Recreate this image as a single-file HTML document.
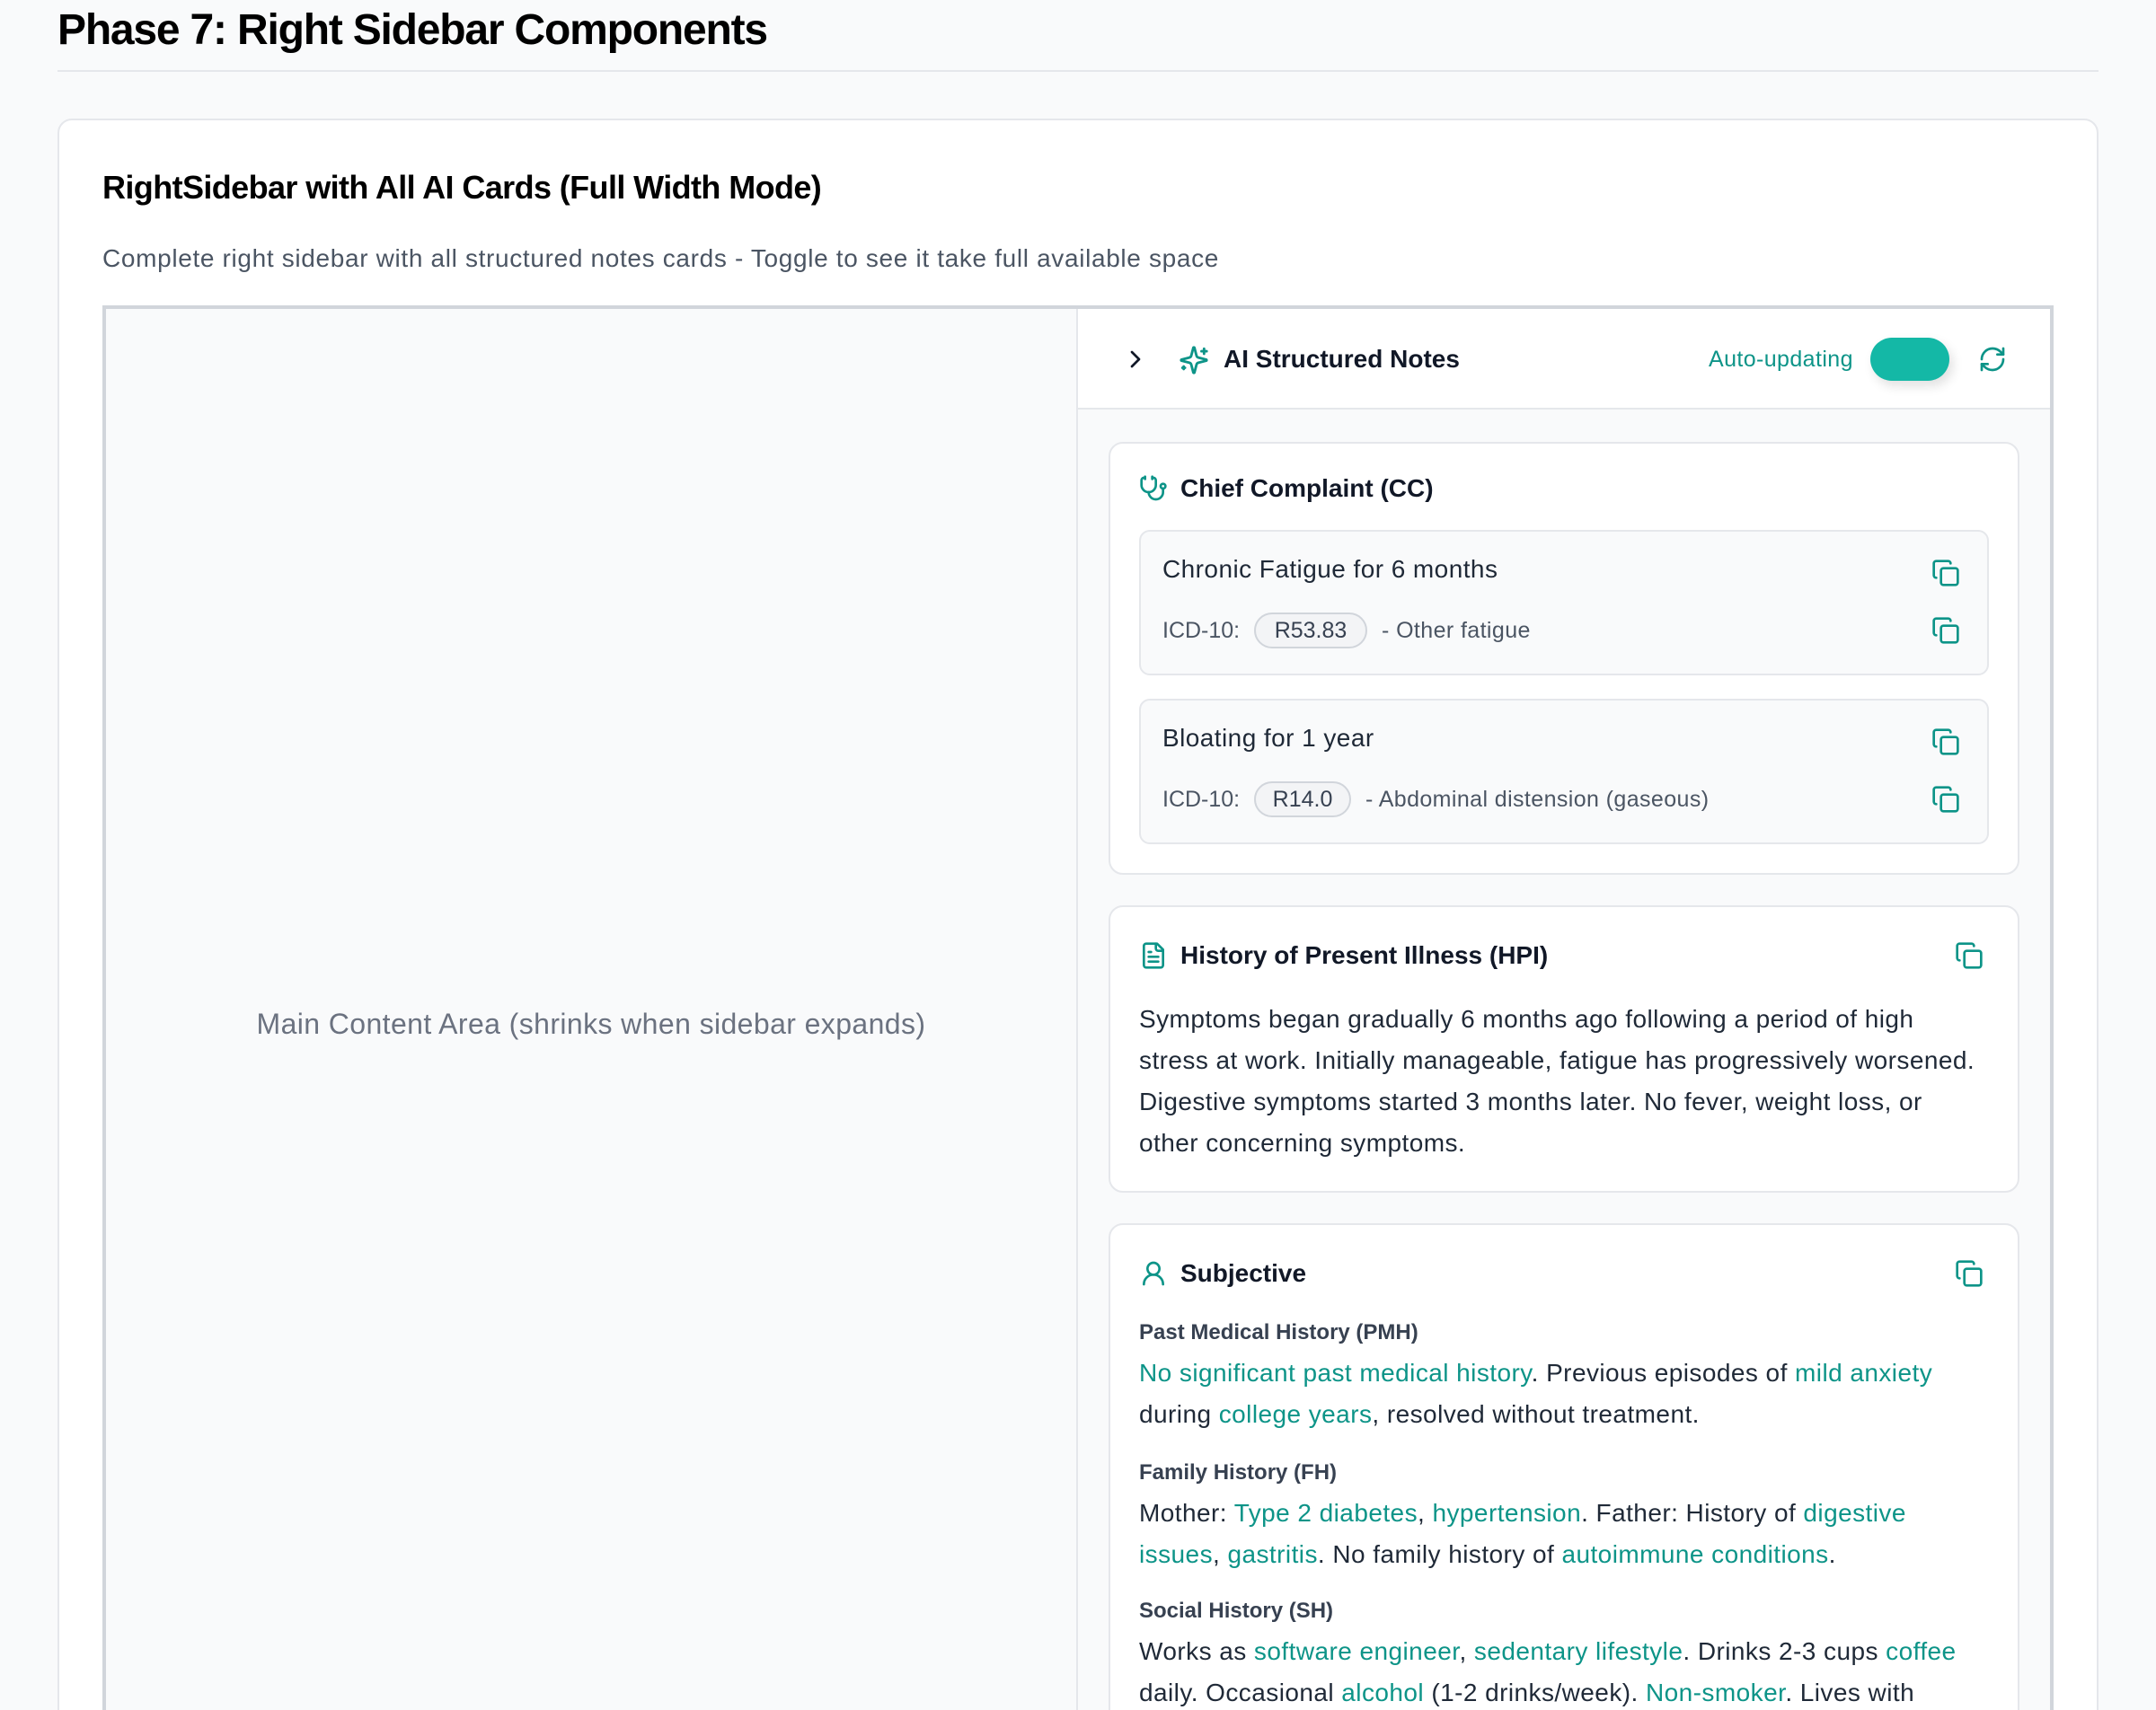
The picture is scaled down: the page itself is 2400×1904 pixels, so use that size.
<!DOCTYPE html>
<html><head><meta charset="utf-8">
<style>
*{box-sizing:border-box;margin:0;padding:0}
html,body{width:2400px;height:1904px;overflow:hidden;background:#f9fafb}
#w{zoom:2;width:1200px;height:952px;position:relative;font-family:"Liberation Sans",sans-serif;color:#111827;overflow:hidden}
.a{position:absolute;white-space:nowrap}
svg{position:absolute;fill:none;stroke-linecap:round;stroke-linejoin:round}
.t{color:#0d9488}
.ic{stroke:#0d9488;stroke-width:2}
.card{position:absolute;left:617px;width:507px;background:#fff;border:1px solid #e5e7eb;border-radius:8px}
.item{position:absolute;left:634px;width:473px;background:#f9fafb;border:1px solid #e5e7eb;border-radius:6px}
.h{font-size:14px;font-weight:bold;color:#111827}
.p{font-size:14px;color:#1f2937;letter-spacing:0.22px}
.lbl{font-size:12px;font-weight:bold;color:#374151}
.icd{font-size:12.5px;color:#4b5563}
.pill{position:absolute;height:20px;border:1px solid #d1d5db;background:#f3f4f6;border-radius:10px;font-size:12.5px;color:#374151;text-align:center;line-height:18px}
</style></head><body><div id="w">
<div class="a" style="left:32px;top:3px;font-size:24px;font-weight:bold;color:#000;letter-spacing:-0.6px">Phase 7: Right Sidebar Components</div>
<div class="a" style="left:32px;top:39px;width:1136px;height:1px;background:#e5e7eb"></div>
<div class="a" style="left:32px;top:66px;width:1136px;height:920px;background:#fff;border:1px solid #e5e7eb;border-radius:8px"></div>
<div class="a" style="left:57px;top:94px;font-size:18px;font-weight:bold;color:#000;letter-spacing:-0.3px">RightSidebar with All AI Cards (Full Width Mode)</div>
<div class="a" style="left:57px;top:136px;font-size:14px;color:#4b5563;letter-spacing:0.33px">Complete right sidebar with all structured notes cards - Toggle to see it take full available space</div>
<div class="a" style="left:57px;top:170px;width:1086px;height:820px;border:2px solid #d1d5db;background:#f9fafb"></div>
<div class="a" style="left:599px;top:172px;width:1px;height:800px;background:#e5e7eb"></div>
<div class="a" style="left:59px;top:561px;width:540px;text-align:center;font-size:16px;color:#6b7280;letter-spacing:0.2px">Main Content Area (shrinks when sidebar expands)</div>
<div class="a" style="left:600px;top:172px;width:541px;height:56px;background:#fff;border-bottom:1px solid #e5e7eb"></div>
<svg style="left:624px;top:192px" width="16" height="16" viewBox="0 0 24 24" stroke="#111827" stroke-width="2"><path d="m9 18 6-6-6-6"/></svg>
<svg style="left:656px;top:192px" width="17" height="17" viewBox="0 0 24 24" class="ic"><path d="M9.937 15.5A2 2 0 0 0 8.5 14.063l-6.135-1.582a.5.5 0 0 1 0-.962L8.5 9.936A2 2 0 0 0 9.937 8.5l1.582-6.135a.5.5 0 0 1 .963 0L14.063 8.5A2 2 0 0 0 15.5 9.937l6.135 1.581a.5.5 0 0 1 0 .964L15.5 14.063a2 2 0 0 0-1.437 1.437l-1.582 6.135a.5.5 0 0 1-.963 0z"/><path d="M20 3v4"/><path d="M22 5h-4"/><path d="M4 17v2"/><path d="M5 18H3"/></svg>
<div class="a h" style="left:681px;top:192px;font-size:14px">AI Structured Notes</div>
<div class="a t" style="left:951px;top:193px;font-size:12.5px;letter-spacing:0.2px">Auto-updating</div>
<div class="a" style="left:1041px;top:188px;width:44px;height:24px;border-radius:12px;background:#14b8a6;box-shadow:2px 3px 6px rgba(0,0,0,.12)"></div>
<svg style="left:1101px;top:192px" width="16" height="16" viewBox="0 0 24 24" class="ic"><path d="M3 12a9 9 0 0 1 9-9 9.75 9.75 0 0 1 6.74 2.74L21 8"/><path d="M21 3v5h-5"/><path d="M21 12a9 9 0 0 1-9 9 9.75 9.75 0 0 1-6.74-2.74L3 16"/><path d="M8 16H3v5"/></svg>
<div class="a" style="left:600px;top:229px;width:541px;height:760px;background:#f9fafb"></div>
<div class="card" style="top:246px;height:241px"></div>
<svg style="left:634px;top:264px" width="16" height="16" viewBox="0 0 24 24" class="ic"><path d="M11 2v2"/><path d="M5 2v2"/><path d="M5 3H4a2 2 0 0 0-2 2v4a6 6 0 0 0 12 0V5a2 2 0 0 0-2-2h-1"/><path d="M8 15a6 6 0 0 0 12 0v-3"/><circle cx="20" cy="10" r="2"/></svg>
<div class="a h" style="left:657px;top:264px">Chief Complaint (CC)</div>
<div class="item" style="top:295px;height:81px"></div>
<div class="a p" style="left:647px;top:309px">Chronic Fatigue for 6 months</div>
<div class="a icd" style="left:647px;top:344px">ICD-10:</div>
<div class="pill" style="left:698px;top:341px;width:63px">R53.83</div>
<div class="a icd" style="left:769px;top:344px;letter-spacing:0.2px">- Other fatigue</div>
<div class="item" style="top:389px;height:81px"></div>
<div class="a p" style="left:647px;top:403px">Bloating for 1 year</div>
<div class="a icd" style="left:647px;top:438px">ICD-10:</div>
<div class="pill" style="left:698px;top:435px;width:54px">R14.0</div>
<div class="a icd" style="left:760px;top:438px;letter-spacing:0.2px">- Abdominal distension (gaseous)</div>
<div class="card" style="top:504px;height:160px"></div>
<svg style="left:634px;top:524px" width="16" height="16" viewBox="0 0 24 24" class="ic"><path d="M15 2H6a2 2 0 0 0-2 2v16a2 2 0 0 0 2 2h12a2 2 0 0 0 2-2V7Z"/><path d="M14 2v4a2 2 0 0 0 2 2h4"/><path d="M10 9H8"/><path d="M16 13H8"/><path d="M16 17H8"/></svg>
<div class="a h" style="left:657px;top:524px">History of Present Illness (HPI)</div>
<div class="a p" style="left:634px;top:556px;line-height:23px">Symptoms began gradually 6 months ago following a period of high<br>stress at work. Initially manageable, fatigue has progressively worsened.<br>Digestive symptoms started 3 months later. No fever, weight loss, or<br>other concerning symptoms.</div>
<div class="card" style="top:681px;height:300px"></div>
<svg style="left:634px;top:701px" width="16" height="16" viewBox="0 0 24 24" class="ic"><circle cx="12" cy="8" r="5"/><path d="M20 21a8 8 0 0 0-16 0"/></svg>
<div class="a h" style="left:657px;top:701px">Subjective</div>
<div class="a lbl" style="left:634px;top:735px">Past Medical History (PMH)</div>
<div class="a p" style="left:634px;top:753px;line-height:23px"><span class="t">No significant past medical history</span>. Previous episodes of <span class="t">mild anxiety</span><br>during <span class="t">college years</span>, resolved without treatment.</div>
<div class="a lbl" style="left:634px;top:813px">Family History (FH)</div>
<div class="a p" style="left:634px;top:831px;line-height:23px">Mother: <span class="t">Type 2 diabetes</span>, <span class="t">hypertension</span>. Father: History of <span class="t">digestive</span><br><span class="t">issues</span>, <span class="t">gastritis</span>. No family history of <span class="t">autoimmune conditions</span>.</div>
<div class="a lbl" style="left:634px;top:890px">Social History (SH)</div>
<div class="a p" style="left:634px;top:908px;line-height:23px">Works as <span class="t">software engineer</span>, <span class="t">sedentary lifestyle</span>. Drinks 2-3 cups <span class="t">coffee</span><br>daily. Occasional <span class="t">alcohol</span> (1-2 drinks/week). <span class="t">Non-smoker</span>. Lives with</div>
<svg style="left:1075px;top:311px" width="16" height="16" viewBox="0 0 24 24" class="ic"><rect width="14" height="14" x="8" y="8" rx="2"/><path d="M4 16c-1.1 0-2-.9-2-2V4c0-1.1.9-2 2-2h10c1.1 0 2 .9 2 2"/></svg>
<svg style="left:1075px;top:343px" width="16" height="16" viewBox="0 0 24 24" class="ic"><rect width="14" height="14" x="8" y="8" rx="2"/><path d="M4 16c-1.1 0-2-.9-2-2V4c0-1.1.9-2 2-2h10c1.1 0 2 .9 2 2"/></svg>
<svg style="left:1075px;top:405px" width="16" height="16" viewBox="0 0 24 24" class="ic"><rect width="14" height="14" x="8" y="8" rx="2"/><path d="M4 16c-1.1 0-2-.9-2-2V4c0-1.1.9-2 2-2h10c1.1 0 2 .9 2 2"/></svg>
<svg style="left:1075px;top:437px" width="16" height="16" viewBox="0 0 24 24" class="ic"><rect width="14" height="14" x="8" y="8" rx="2"/><path d="M4 16c-1.1 0-2-.9-2-2V4c0-1.1.9-2 2-2h10c1.1 0 2 .9 2 2"/></svg>
<svg style="left:1088px;top:524px" width="16" height="16" viewBox="0 0 24 24" class="ic"><rect width="14" height="14" x="8" y="8" rx="2"/><path d="M4 16c-1.1 0-2-.9-2-2V4c0-1.1.9-2 2-2h10c1.1 0 2 .9 2 2"/></svg>
<svg style="left:1088px;top:701px" width="16" height="16" viewBox="0 0 24 24" class="ic"><rect width="14" height="14" x="8" y="8" rx="2"/><path d="M4 16c-1.1 0-2-.9-2-2V4c0-1.1.9-2 2-2h10c1.1 0 2 .9 2 2"/></svg>
</div></body></html>
